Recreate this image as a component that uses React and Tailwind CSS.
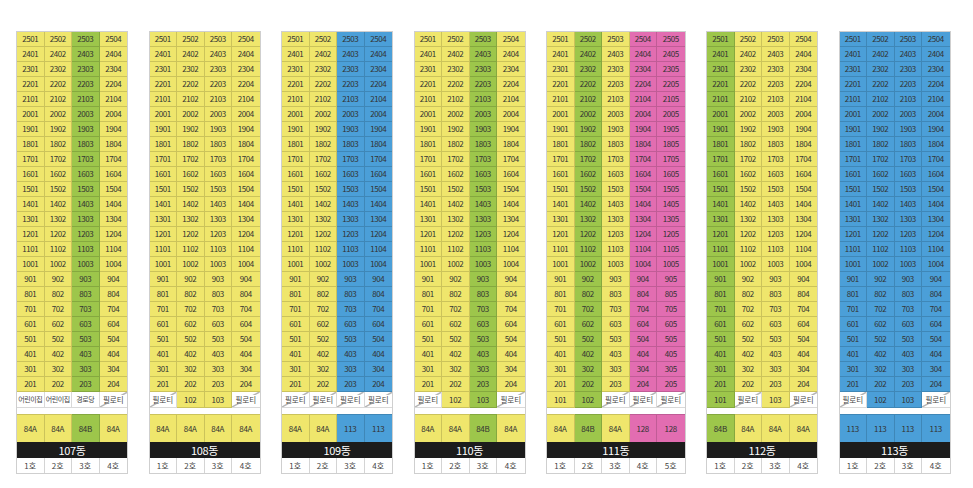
import React from "react";

const Y = "bg-[#efe66c]";
const G = "bg-[#9dc64b]";
const B = "bg-[#4b9fd8]";
const P = "bg-[#e26db1]";

const buildings = [
  {
    name: "107동",
    cols: [Y, Y, G, Y],
    base: [
      { t: "어린이집", c: "white" },
      { t: "어린이집", c: "white" },
      { t: "경로당", c: "white" },
      { t: "필로티", c: "diag" },
    ],
    types: ["84A", "84A", "84B", "84A"],
  },
  {
    name: "108동",
    cols: [Y, Y, Y, Y],
    base: [
      { t: "필로티", c: "diag" },
      { t: "102", c: Y },
      { t: "103", c: Y },
      { t: "필로티", c: "diag" },
    ],
    types: ["84A", "84A", "84A", "84A"],
  },
  {
    name: "109동",
    cols: [Y, Y, B, B],
    base: [
      { t: "필로티", c: "diag" },
      { t: "필로티", c: "diag" },
      { t: "필로티", c: "diag" },
      { t: "필로티", c: "diag" },
    ],
    types: ["84A", "84A", "113", "113"],
  },
  {
    name: "110동",
    cols: [Y, Y, G, Y],
    base: [
      { t: "필로티", c: "diag" },
      { t: "102", c: Y },
      { t: "103", c: G },
      { t: "필로티", c: "diag" },
    ],
    types: ["84A", "84A", "84B", "84A"],
  },
  {
    name: "111동",
    cols: [Y, G, Y, P, P],
    base: [
      { t: "101", c: Y },
      { t: "102", c: G },
      { t: "필로티", c: "diag" },
      { t: "필로티", c: "diag" },
      { t: "필로티", c: "diag" },
    ],
    types: ["84A", "84B", "84A", "128", "128"],
  },
  {
    name: "112동",
    cols: [G, Y, Y, Y],
    base: [
      { t: "101", c: G },
      { t: "필로티", c: "diag" },
      { t: "103", c: Y },
      { t: "필로티", c: "diag" },
    ],
    types: ["84B", "84A", "84A", "84A"],
  },
  {
    name: "113동",
    cols: [B, B, B, B],
    base: [
      { t: "필로티", c: "diag" },
      { t: "102", c: B },
      { t: "103", c: B },
      { t: "필로티", c: "diag" },
    ],
    types: ["113", "113", "113", "113"],
  },
];

const floors = Array.from({ length: 24 }, (_, i) => 25 - i);

const font = { fontFamily: '"Noto Sans CJK KR", "Noto Sans", sans-serif' };

function Building({ b }) {
  const n = b.cols.length;
  const gridCls =
    n === 5 ? "grid grid-cols-[repeat(5,27.5px)]" : "grid grid-cols-[repeat(4,27.5px)]";
  const edge = (i) => (i === n - 1 ? "" : "border-r");

  return (
    <div className="flex flex-col border border-[#cfcfcf] bg-white">
      <div className={gridCls}>
        {floors.map((f) =>
          b.cols.map((col, i) => (
            <div
              key={`${f}-${i}`}
              className={`${col} ${edge(i)} flex h-[15px] items-center justify-center border-b border-black/15 text-[8px] tracking-[-0.5px] text-[#333]`}
            >
              {`${f}0${i + 1}`}
            </div>
          ))
        )}
        {b.base.map((cell, i) => {
          if (cell.c === "diag") {
            return (
              <div
                key={`b${i}`}
                className={`${edge(i)} relative flex h-[16px] items-center justify-center border-b border-black/15 bg-white text-[7.5px] text-[#444]`}
              >
                <svg className="absolute inset-0 h-full w-full" viewBox="0 0 100 100" preserveAspectRatio="none">
                  <line x1="0" y1="100" x2="100" y2="0" stroke="#b5b5b5" strokeWidth="1.5" vectorEffect="non-scaling-stroke" />
                </svg>
                <span className="relative bg-white px-px leading-[9px]">{cell.t}</span>
              </div>
            );
          }
          const bg =
            cell.c === "white"
              ? "bg-white text-[7px] tracking-[-0.5px] text-[#444]"
              : `${cell.c} text-[8px] tracking-[-0.3px] text-[#333]`;
          return (
            <div
              key={`b${i}`}
              className={`${edge(i)} ${bg} flex h-[16px] items-center justify-center whitespace-nowrap border-b border-black/15`}
            >
              {cell.t}
            </div>
          );
        })}
      </div>
      <div className="h-[6px] bg-white" />
      <div className={gridCls}>
        {b.types.map((t, i) => (
          <div
            key={`t${i}`}
            className={`${b.cols[i]} ${edge(i)} flex h-[28px] items-center justify-center border-t border-black/15 text-[8px] tracking-[-0.3px] text-[#333]`}
          >
            {t}
          </div>
        ))}
      </div>
      <div className="flex h-[16px] items-center justify-center bg-[#1c1c1c] text-[11px] tracking-[-0.3px] text-white">
        {b.name}
      </div>
      <div className={gridCls}>
        {b.cols.map((_, i) => (
          <div
            key={`h${i}`}
            className={`${edge(i)} flex h-[15px] items-center justify-center border-[#d4d4d4] bg-white text-[8px] text-[#444]`}
          >
            {`${i + 1}호`}
          </div>
        ))}
      </div>
    </div>
  );
}

export default function App() {
  return (
    <div className="h-[488px] w-[973px] bg-white pl-[16px] pt-[31px]" style={font}>
      <div className="flex items-start gap-[20.5px]">
        {buildings.map((b) => (
          <Building key={b.name} b={b} />
        ))}
      </div>
    </div>
  );
}
